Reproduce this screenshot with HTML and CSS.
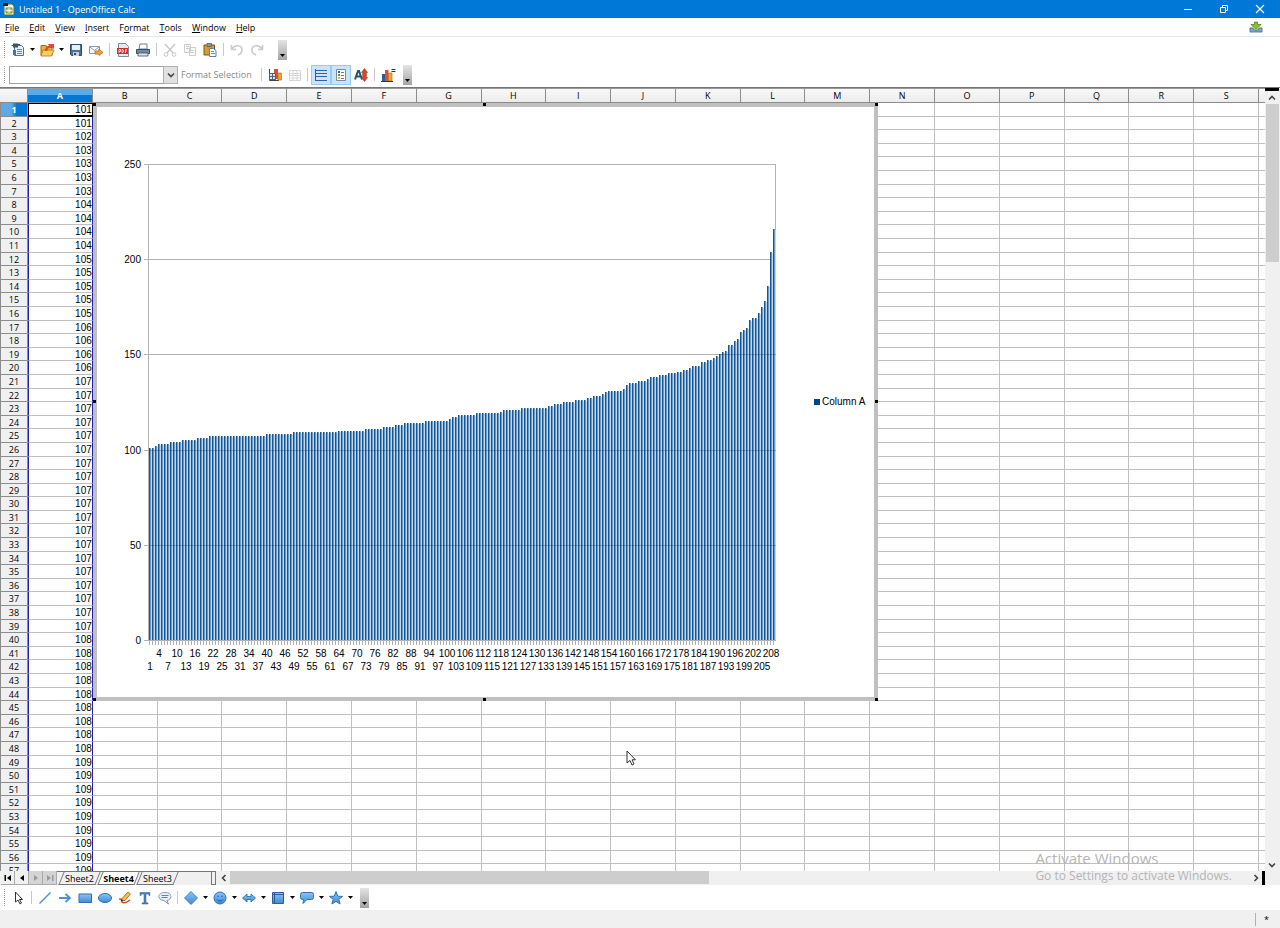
FILE: index.html
```html
<!DOCTYPE html>
<html lang="en">
<head>
<meta charset="utf-8">
<title>Untitled 1 - OpenOffice Calc</title>
<link rel="stylesheet" href="styles.css">
</head>
<body>
<svg class="defs" aria-hidden="true">
  <defs>
    <linearGradient id="blue" x1="0" y1="0" x2="0" y2="1"><stop offset="0" stop-color="#8cc4f4"/><stop offset="1" stop-color="#3b8cd8"/></linearGradient>
    <symbol id="caret" viewBox="0 0 5 3"><path d="M0 0h5L2.500 3z" fill="#000"/></symbol>
    <symbol id="chev" viewBox="0 0 8 8"><path d="M1 2.500l3 3 3-3" fill="none" stroke="#444" stroke-width="1.600"/></symbol>
  </defs>
</svg>

<header class="titlebar">
  <svg class="app-icon" viewBox="0 0 12 14"><path d="M1 2h8l2 2v9H1z" fill="#e9efe0" stroke="#5c6b48"/><path d="M0 1h5v3H0z" fill="#222"/><path d="M3 6h6v5H3z" fill="#b6cf5a" stroke="#71852a" stroke-width=".8"/><path d="M3 8.500h6M6 6v5" stroke="#fff" stroke-width=".8"/></svg>
  <h1>Untitled 1 - OpenOffice Calc</h1>
  <div class="win-buttons">
    <button aria-label="Minimize"><svg viewBox="0 0 10 10"><path d="M1 5.500h8" stroke="#fff"/></svg></button>
    <button aria-label="Restore"><svg viewBox="0 0 10 10"><path d="M1.500 3.500h5v5h-5zM3.500 3.500v-2h5v5h-2" fill="none" stroke="#fff"/></svg></button>
    <button aria-label="Close"><svg viewBox="0 0 10 10"><path d="M1 1l8 8M9 1l-8 8" stroke="#fff" stroke-width="1.100"/></svg></button>
  </div>
</header>

<nav class="menubar">
  <button><u>F</u>ile</button><button><u>E</u>dit</button><button><u>V</u>iew</button><button><u>I</u>nsert</button><button>F<u>o</u>rmat</button><button><u>T</u>ools</button><button><u>W</u>indow</button><button><u>H</u>elp</button>
  <button class="update" aria-label="Updates available"><svg viewBox="0 0 14 12"><path d="M1 7h3l1 2h4l1-2h3v4H1z" fill="#7fa9c8" stroke="#3f6a8c" stroke-width=".8"/><path d="M5.500 1h3v2.500H12L7 8.500 2 3.500h3.500z" fill="#86c32c" stroke="#4c8a12" stroke-width=".8"/></svg></button>
</nav>

<div class="toolbar" role="toolbar" aria-label="Standard">
  <span class="grip"></span>
  <button class="tool" aria-label="New"><svg viewBox="0 0 16 16"><path d="M4.500 3.500h7l2 2v8h-9z" fill="#e8f0f7" stroke="#56708a"/><path d="M3 1.500h5v4H3z" fill="#395570"/><path d="M1.500 3.500h3M8 2.500h2" stroke="#395570"/><path d="M7 7.500h5M7 9.500h5M7 11.500h5" stroke="#5d88b0"/><path d="M3 8h3v5H3z" fill="#4577a0"/></svg></button>
  <button class="drop" aria-label="New options"><svg><use href="#caret"/></svg></button>
  <button class="tool" aria-label="Open"><svg viewBox="0 0 16 16"><path d="M2 3.500h5l1 2h5v8H2z" fill="#f0b13a" stroke="#a9640f"/><path d="M4 8h11l-2.500 6H2z" fill="#fbd15c" stroke="#b8741a" stroke-width=".8"/><path d="M6 9c0-4 2-5 4-5L9 2h6v5l-2-1.500c-3-.5-4 .5-5 3.500z" fill="#d4502a"/></svg></button>
  <button class="drop" aria-label="Open options"><svg><use href="#caret"/></svg></button>
  <button class="tool" aria-label="Save"><svg viewBox="0 0 16 16"><path d="M2.500 2.500h11v11h-10l-1-1z" fill="#4a7396" stroke="#2b4a66"/><path d="M4 3h8v5H4z" fill="#e5eef5"/><path d="M5 10h6v4H5z" fill="#c6d3de"/><path d="M6 11h2v2H6z" fill="#2b4a66"/></svg></button>
  <button class="tool" aria-label="E-mail"><svg viewBox="0 0 16 16"><path d="M1.500 4.500h10v7h-10z" fill="#f7f7f7" stroke="#8b9bab"/><path d="M2 5l4.500 3.500L11 5" fill="none" stroke="#8b9bab"/><path d="M7 9h4V7l4 3.500-4 3V12H7z" fill="#f2a43c" stroke="#b3681a" stroke-width=".8"/></svg></button>
  <span class="sep"></span>
  <button class="tool" aria-label="Export as PDF"><svg viewBox="0 0 16 16"><path d="M3.500 1.500h7l3 3v10h-10z" fill="#e3e9ef" stroke="#7b8b9a"/><path d="M2 6h11v6H2z" fill="#d8262c"/><path d="M4 11V7.500h1.500v2H4M7 7.500v3h1l.8-1.500L8 7.500zM10.500 11V7.500H12M10.500 9H12" fill="none" stroke="#fff" stroke-width=".8"/></svg></button>
  <button class="tool" aria-label="Print"><svg viewBox="0 0 16 16"><path d="M5 2h7v5H4z" fill="#fff" stroke="#6b7f90"/><path d="M1.500 7.500h13v4h-13z" fill="#6e8ba3" stroke="#344f66"/><path d="M3 11h10v3H3z" fill="#dfe5ea" stroke="#344f66" stroke-width=".8"/></svg></button>
  <span class="sep"></span>
  <button class="tool" disabled aria-label="Cut"><svg viewBox="0 0 16 16" fill="none" stroke="#c6c6c6"><path d="M3 2l8 9M13 2L5 11" stroke-width="1.300"/><circle cx="4" cy="12.500" r="1.800"/><circle cx="12" cy="12.500" r="1.800"/></svg></button>
  <button class="tool" disabled aria-label="Copy"><svg viewBox="0 0 16 16" fill="#fafafa" stroke="#cdcdcd"><path d="M2.500 2.500h6v8h-6zM7.500 5.500h6v8h-6z"/><path d="M9 8.500h3M9 10.500h3M4 4.500h3M4 6.500h3"/></svg></button>
  <button class="tool" aria-label="Paste"><svg viewBox="0 0 16 16"><path d="M2 3h10.500v10H2z" fill="#d89b35" stroke="#7c5214"/><path d="M5 1.500h4.500v3H5z" fill="#8d9aa5" stroke="#4f5b66" stroke-width=".8"/><path d="M7.500 6.500h4l2.500 2v6H7.500z" fill="#f3f8fc" stroke="#5882a5"/><path d="M9 9.500h3M9 11.500h4" stroke="#5d93c0"/></svg></button>
  <span class="sep"></span>
  <button class="tool" disabled aria-label="Undo"><svg viewBox="0 0 16 16" fill="none" stroke="#cbcbcb" stroke-width="1.600"><path d="M2.500 3v4.500H7M3 7c3-5 10-4 10 1 0 2-1.500 4-4 5"/></svg></button>
  <button class="tool" disabled aria-label="Redo"><svg viewBox="0 0 16 16" fill="none" stroke="#cbcbcb" stroke-width="1.600"><path d="M13.500 3v4.500H9M13 7C10 2 3 3 3 8c0 2 1.500 4 4 5"/></svg></button>
  <button class="more wide" aria-label="More standard tools"><svg><use href="#caret"/></svg></button>
</div>

<div class="toolbar" role="toolbar" aria-label="Chart formatting">
  <span class="grip"></span>
  <span class="combo"><select aria-label="Chart element"><option></option></select><span class="combo-arrow"><svg><use href="#chev"/></svg></span></span>
  <button class="text-tool" disabled>Format Selection</button>
  <span class="sep"></span>
  <button class="tool" aria-label="Chart type"><svg viewBox="0 0 16 16"><path d="M2.500 2v11.500H12" fill="none" stroke="#444"/><path d="M7 2h4v10H7z" fill="#d8532a"/><path d="M11 6h3.500v7H11z" fill="#f2a62f" stroke="#b8701a" stroke-width=".7"/><path d="M2.500 6.500h6v6h-6z" fill="#dce7f0" stroke="#46627b"/><path d="M5.500 6.500v6M2.500 9.500h6" stroke="#46627b"/></svg></button>
  <button class="tool" disabled aria-label="Chart data table"><svg viewBox="0 0 16 16"><path d="M2.500 3.500h11v10h-11zM2.500 6.500h11M2.500 8.500h11M2.500 11h11M6 3.500v10M10 3.500v10" fill="none" stroke="#d6d6d6"/></svg></button>
  <span class="sep tight"></span>
  <button class="tool on" aria-pressed="true" aria-label="Horizontal grids"><svg viewBox="0 0 16 16"><path d="M2.500 2v12" stroke="#555"/><path d="M2 3.500h12M2 6.500h12M2 9.500h12M2 13.500h12" stroke="#2d62ad"/></svg></button>
  <button class="tool on" aria-pressed="true" aria-label="Legend"><svg viewBox="0 0 16 16"><path d="M3.500 2.500h9v11h-9z" fill="#fafcff" stroke="#7c8b99"/><path d="M5 4h2v2H5z" fill="#2b62a8"/><path d="M5 7h2v2H5z" fill="#e0692a"/><path d="M5 10h2v2H5z" fill="#f0b52e"/><path d="M8 5.500h3M8 8.500h3M8 11.500h3" stroke="#777"/></svg></button>
  <button class="tool" aria-label="Scale text"><svg viewBox="0 0 16 16"><path d="M2 12.500L5 4h1l3 8.500M3.500 9.500h4" fill="none" stroke="#24527a" stroke-width="2"/><path d="M11.500 1.500l3 4h-1.200v5h1.200l-3 4-3-4h1.200v-5H8.500z" fill="#d7482a" stroke="#99301a" stroke-width=".6"/></svg></button>
  <span class="sep"></span>
  <button class="tool" aria-label="Automatic layout"><svg viewBox="0 0 16 16"><path d="M2 7h3v7H2z" fill="#2c5f96"/><path d="M5 3h3.500v11H5z" fill="#d8532a"/><path d="M8.500 6H12v8H8.500z" fill="#f2a62f" stroke="#b8701a" stroke-width=".7"/><path d="M1 14.500h12M11.500 2.500h4M11.500 4.500h4" stroke="#333"/></svg></button>
  <button class="more" aria-label="More formatting tools"><svg><use href="#caret"/></svg></button>
</div>

<main class="workspace">
  <div class="sheet">
    <table class="cells" id="cells"><thead></thead><tbody></tbody></table>
    <svg class="chart" id="chart" viewBox="0 0 785 598" role="img" aria-label="Column A chart"></svg>
  </div>
  <div class="vscroll">
    <span class="split"></span>
    <button aria-label="Scroll up"><svg class="up"><use href="#chev"/></svg></button>
    <span class="vtrack"><span class="vthumb"></span></span>
    <button aria-label="Scroll down"><svg><use href="#chev"/></svg></button>
  </div>
</main>

<div class="tabrow">
  <button class="nav" aria-label="First sheet"><svg viewBox="0 0 8 8"><path d="M.500 1h1.500v6H.500zM7 1v6L3 4z"/></svg></button>
  <button class="nav" aria-label="Previous sheet"><svg viewBox="0 0 8 8"><path d="M6 1v6L2 4z"/></svg></button>
  <button class="nav" disabled aria-label="Next sheet"><svg viewBox="0 0 8 8"><path d="M2 1v6l4-3z"/></svg></button>
  <button class="nav" disabled aria-label="Last sheet"><svg viewBox="0 0 8 8"><path d="M1 1v6l4-3zM6 1h1.500v6H6z"/></svg></button>
  <div class="tabs">
    <button class="tab">Sheet2</button><button class="tab active">Sheet4</button><button class="tab">Sheet3</button>
  </div>
  <span class="tabsplit"></span>
  <button class="harrow" aria-label="Scroll left"><svg class="left"><use href="#chev"/></svg></button>
  <span class="htrack"><span class="hthumb"></span></span>
  <button class="harrow" aria-label="Scroll right"><svg class="right"><use href="#chev"/></svg></button>
  <span class="hsplit"></span>
</div>

<div class="toolbar" role="toolbar" aria-label="Drawing">
  <span class="grip"></span>
  <button class="tool" aria-label="Select"><svg viewBox="0 0 16 16"><path d="M5.500 2v10l2.500-2 2 4 1.500-1-2-3.500h3z" fill="#fff" stroke="#333"/></svg></button>
  <span class="sep"></span>
  <button class="tool" aria-label="Line"><svg viewBox="0 0 16 16"><path d="M2.500 13.500l11-11" stroke="#4a8fd4" stroke-width="1.400"/></svg></button>
  <button class="tool" aria-label="Arrow"><svg viewBox="0 0 16 16"><path d="M2 8h10M8.500 4l4.500 4-4.500 4" fill="none" stroke="#4a90d6" stroke-width="1.800"/></svg></button>
  <button class="tool" aria-label="Rectangle"><svg viewBox="0 0 16 16"><path d="M2 4h12.500v8.500H2z" fill="url(#blue)" stroke="#2c6fb3"/></svg></button>
  <button class="tool" aria-label="Ellipse"><svg viewBox="0 0 16 16"><ellipse cx="8" cy="8" rx="6.500" ry="4.500" fill="url(#blue)" stroke="#2c6fb3"/></svg></button>
  <button class="tool" aria-label="Freeform"><svg viewBox="0 0 16 16"><path d="M2 9c2 0 4 0 3 2s3 3 8-1" fill="none" stroke="#d44a2a" stroke-width="1.600"/><path d="M5 8.500L11 2l2.500 2L8 10.500 4.500 11z" fill="#f5c243" stroke="#8c5f14" stroke-width=".8"/><path d="M4.500 9l2 1.500-3 1z" fill="#333"/></svg></button>
  <button class="tool" aria-label="Text"><svg viewBox="0 0 16 16"><path d="M3 2.500h10v3h-1L11.500 4H9v8.500l2 .500v1H5v-1l2-.500V4H4.500L4 5.500H3z" fill="#4b83b8" stroke="#2e608f" stroke-width=".5"/></svg></button>
  <button class="tool" aria-label="Callout"><svg viewBox="0 0 16 16"><path d="M8 2.500c8 0 7 7.500 2 8l1.500 3.500-4.500-3.500C0 10 0 2.500 8 2.500z" fill="#eaf1f8" stroke="#8197ac"/><path d="M4.500 5.500h7M4.500 7.500h6" stroke="#6580a0"/></svg></button>
  <span class="sep tight"></span>
  <button class="tool" aria-label="Basic shapes"><svg viewBox="0 0 16 16"><path d="M8 1.500L14.500 8 8 14.500 1.500 8z" fill="url(#blue)" stroke="#2c6fb3" stroke-width=".8"/></svg></button>
  <button class="drop" aria-label="Basic shape options"><svg><use href="#caret"/></svg></button>
  <button class="tool" aria-label="Symbol shapes"><svg viewBox="0 0 16 16"><circle cx="8" cy="8" r="6" fill="url(#blue)" stroke="#2c6fb3"/><path d="M5 9.500c1.500 2 4.500 2 6 0M6 5.500v1.500M10 5.500v1.500" fill="none" stroke="#1c5596"/></svg></button>
  <button class="drop" aria-label="Symbol shape options"><svg><use href="#caret"/></svg></button>
  <button class="tool" aria-label="Block arrows"><svg viewBox="0 0 16 16"><path d="M1.500 8L6 4v2.500h4V4l4.500 4-4.500 4V9.500H6V12z" fill="url(#blue)" stroke="#2c6fb3" stroke-width=".9"/></svg></button>
  <button class="drop" aria-label="Block arrow options"><svg><use href="#caret"/></svg></button>
  <button class="tool" aria-label="Flowcharts"><svg viewBox="0 0 16 16"><path d="M2.500 2.500h11v11h-11z" fill="url(#blue)" stroke="#2c5f99"/><path d="M4.500 2v12M2 4.500h12" stroke="#2c5f99"/></svg></button>
  <button class="drop" aria-label="Flowchart options"><svg><use href="#caret"/></svg></button>
  <button class="tool" aria-label="Callouts"><svg viewBox="0 0 16 16"><path d="M3.500 2.500h9q2 0 2 2v3q0 2-2 2H8L4 13.500l.500-4h-1q-2 0-2-2v-3q0-2 2-2z" fill="url(#blue)" stroke="#2c6fb3"/></svg></button>
  <button class="drop" aria-label="Callout options"><svg><use href="#caret"/></svg></button>
  <button class="tool" aria-label="Stars"><svg viewBox="0 0 16 16"><path d="M8 1.500l1.800 4.700 4.700.200-3.700 3 1.300 4.600L8 11.400 3.900 14l1.300-4.600-3.700-3 4.700-.200z" fill="url(#blue)" stroke="#2c6fb3"/></svg></button>
  <button class="drop" aria-label="Star options"><svg><use href="#caret"/></svg></button>
  <button class="more" aria-label="More drawing tools"><svg><use href="#caret"/></svg></button>
</div>

<footer class="status"><span class="status-sep"></span><span class="status-dot">*</span></footer>

<div class="watermark"><p class="wm-title">Activate Windows</p><p class="wm-text">Go to Settings to activate Windows.</p></div>
<svg class="pointer" viewBox="0 0 10 16"><path d="M1 1v12l3-2.500 2 4.500 2-1-2-4.200h3.500z" fill="#fff" stroke="#333"/></svg>
<script src="script.js"></script>
</body>
</html>
```
FILE: styles.css
```css
* { box-sizing: border-box; }

body {
  margin: 0;
  height: 100vh;
  display: flex;
  flex-direction: column;
  position: relative;
  overflow: hidden;
  background: #fff;
  color: #000;
  font-family: "Open Sans", "Noto Sans", sans-serif;
  font-size: 9px;
}

button {
  margin: 0;
  padding: 0;
  border: 0;
  background: none;
  color: inherit;
  font: inherit;
  display: flex;
  align-items: center;
  justify-content: center;
}

svg { display: block; flex: none; }
.defs { position: absolute; width: 0; height: 0; }

.titlebar {
  flex: none;
  height: 18px;
  display: flex;
  align-items: center;
  padding: 0 2px 0 3px;
  gap: 4px;
  background: #0078d7;
  color: #fff;
}
.titlebar h1 { margin: 0; font-size: 9px; font-weight: 400; }
.app-icon { width: 12px; height: 14px; }
.win-buttons { margin-left: auto; display: flex; }
.win-buttons button { width: 36px; height: 18px; }
.win-buttons svg { width: 10px; height: 10px; }

.menubar {
  flex: none;
  height: 19px;
  display: flex;
  align-items: center;
  padding: 0 17px 0 5px;
  gap: 10px;
  border-bottom: 1px solid #e6e6e6;
}
.menubar u { text-underline-offset: 1px; }
.menubar .update { margin-left: auto; }
.update svg { width: 14px; height: 12px; }

.toolbar {
  flex: none;
  height: 25px;
  display: flex;
  align-items: center;
  padding-left: 4px;
}
.grip { width: 1px; height: 17px; margin-right: 3px; border-left: 1px dotted #999; }
.tool { width: 20px; height: 20px; flex: none; }
.tool svg { width: 16px; height: 16px; }
.tool.on { background: #cce4fb; outline: 1px solid #99cbf7; outline-offset: -1px; }
.drop { width: 9px; height: 20px; flex: none; }
.drop svg, .more svg { width: 5px; height: 3px; }
.sep { width: 1px; height: 13px; margin: 0 3px; background: #c8c8c8; }
.sep.tight { margin: 0 3px 0 2px; }
.more {
  width: 9px;
  height: 20px;
  margin-left: 5px;
  padding-bottom: 3px;
  align-items: flex-end;
  background: linear-gradient(#e4e4e4, #a4a4a4);
}
.more.wide { margin-left: 11px; }

.combo { display: flex; position: relative; width: 169px; height: 18px; margin-left: 1px; }
.combo select {
  width: 100%;
  height: 100%;
  border: 1px solid #a0a0a0;
  background: #fff;
  appearance: none;
  font: inherit;
}
.combo-arrow {
  position: absolute;
  top: 0;
  right: 0;
  width: 15px;
  height: 18px;
  display: flex;
  align-items: center;
  justify-content: center;
  border: 1px solid #b0b0b0;
  background: #e1e1e1;
  pointer-events: none;
}
.combo-arrow svg { width: 8px; height: 8px; }
.text-tool { padding: 0 6px 0 3px; color: #8a8a8a; white-space: nowrap; }

.workspace { flex: 1; min-height: 0; display: flex; border-top: 1px solid #777; }
.sheet { flex: 1; min-width: 0; position: relative; overflow: hidden; }

.cells { display: block; font-family: "Liberation Sans", Arial, sans-serif; font-size: 10px; }
.cells thead { display: block; height: 15px; }
.cells tbody { display: grid; grid-template-rows: repeat(57, minmax(0, 1fr)); height: 775px; }
.cells tr { display: grid; grid-template-columns: 28px repeat(19, 1fr) 6px; grid-template-rows: minmax(0, 1fr); }
.cells th, .cells td {
  min-width: 0;
  min-height: 0;
  padding: 0;
  line-height: 13px;
  border-right: 1px solid #c0c0c0;
  border-bottom: 1px solid #c0c0c0;
}
.cells th {
  font-family: "Open Sans", "Noto Sans", sans-serif;
  font-size: 9px;
  font-weight: 400;
  text-align: center;
  background: #f0f0f0;
  border-color: #8c8c8c;
}
.cells thead th { height: 15px; border-top: 1px solid #999; background: linear-gradient(#f8f8f8, #ececec); }
.cells tbody th { border-left: 1px solid #8c8c8c; }
.cells thead .on { color: #fff; font-weight: 700; background: linear-gradient(#5aa9e8 45%, #0078d7 46%); }
.cells tbody .on { color: #fff; font-weight: 700; background: linear-gradient(90deg, #5aa9e8 40%, #0078d7 60%); }
.cells .value { text-align: right; border-left: 1px solid #2020a8; border-right: 1px solid #2020a8; }
.cells .cursor { border: 1px solid #000; border-bottom-width: 2px; line-height: 12px; }
.cells td:last-child, .cells thead th:last-child { border-right: 0; }

.chart {
  position: absolute;
  left: 93px;
  top: 15px;
  width: 785px;
  height: 598px;
  font-family: "Liberation Sans", Arial, sans-serif;
  font-size: 10px;
}

.vscroll { width: 15px; display: flex; flex-direction: column; padding: 0 1px 0 0; background: #f0f0f0; }
.vscroll button { height: 13px; flex: none; }
.vscroll svg, .harrow svg { width: 8px; height: 8px; }
.up { transform: rotate(180deg); }
.left { transform: rotate(90deg); }
.right { transform: rotate(-90deg); }
.split { height: 3px; background: #000; }
.vtrack { flex: 1; }
.vthumb { display: block; height: 21%; margin-left: 1px; background: #cdcdcd; }

.tabrow { flex: none; height: 14px; display: flex; background: #f0f0f0; padding-left: 1px; }
.nav { width: 14px; border-right: 1px solid #aaa; border-bottom: 1px solid #aaa; }
.nav svg { width: 8px; height: 8px; fill: #000; }
.nav:disabled { background: #d4d4d4; }
.nav:disabled svg { fill: #9a9a9a; }
.tabs { display: flex; width: 155px; padding-left: 3px; border-top: 1px solid #777; border-right: 1px solid #777; }
.tab { position: relative; width: 39px; height: 13px; z-index: 0; }
.tab::before {
  content: "";
  position: absolute;
  inset: 0 1px;
  z-index: -1;
  border: 1px solid #777;
  border-top: 0;
  transform: skewX(-22deg);
}
.tab.active { font-weight: 700; }
.tab.active::before { background: #fff; }
.tabsplit { width: 4px; border: 1px solid #777; border-left: 0; margin-right: 2px; }
.harrow { width: 12px; flex: none; }
.htrack { flex: 1; }
.hthumb { display: block; width: 47%; height: 13px; background: #cdcdcd; }
.hsplit { width: 3px; background: #000; margin-right: 15px; }

.status {
  flex: none;
  height: 18px;
  display: flex;
  align-items: center;
  justify-content: flex-end;
  gap: 8px;
  padding-right: 11px;
  background: #f0f0f0;
}
.status-sep { width: 1px; height: 13px; background: #b0b0b0; }
.status-dot { font-size: 9px; }

.watermark { position: absolute; right: 48px; bottom: 44px; color: #b4b4b4; pointer-events: none; }
.watermark p { margin: 0; white-space: nowrap; }
.wm-title { font-size: 15px; line-height: 20px; }
.wm-text { font-size: 12px; line-height: 16px; }
.pointer { position: absolute; left: 626px; top: 750px; width: 10px; height: 16px; }
```
FILE: script.js
```js
// Runs of equal values in column A: [value, how many rows].
const runs = [
  [101, 2], [102, 1], [103, 4], [104, 4], [105, 5], [106, 4], [107, 19], [108, 9], [109, 15],
  [110, 9], [111, 6], [112, 4], [113, 3], [114, 7], [115, 8], [116, 1], [117, 2], [118, 6],
  [119, 8], [120, 1], [121, 6], [122, 9], [123, 2], [124, 3], [125, 4], [126, 4], [127, 2],
  [128, 3], [129, 1], [130, 1], [131, 5], [132, 1], [134, 1], [135, 3], [136, 3], [137, 1],
  [138, 3], [139, 3], [140, 3], [141, 2], [142, 2], [143, 1], [144, 3], [146, 2], [147, 2],
  [148, 1], [149, 1], [150, 1], [151, 1], [152, 1], [155, 2], [157, 1], [158, 1], [162, 1],
  [163, 1], [164, 1], [168, 1], [169, 2], [172, 1], [175, 1], [178, 1], [186, 1], [204, 1], [216, 1]
];
const values = runs.flatMap(([value, count]) => Array(count).fill(value));
const letters = "ABCDEFGHIJKLMNOPQRS".split("");

const head = "<tr><th></th>" +
  letters.map((l, i) => `<th scope="col"${i ? "" : ' class="on"'}>${l}</th>`).join("") + "<th></th></tr>";
const body = values.slice(0, 57).map((v, r) =>
  `<tr><th scope="row"${r ? "" : ' class="on"'}>${r + 1}</th>` +
  `<td class="value${r ? "" : " cursor"}">${v}</td>` + "<td></td>".repeat(19) + "</tr>").join("");
document.querySelector("#cells thead").innerHTML = head;
document.querySelector("#cells tbody").innerHTML = body;

// Chart: plot area in chart coordinates.
const left = 55, right = 683, base = 537, top0 = 61, step = 3;
const yOf = v => Math.round(base - v * (base - top0) / 250);
let out = '<rect x="2" y="2" width="781" height="594" fill="#fff" stroke="#c0c0c0" stroke-width="4"/>';
let grid = "";
for (let v = 0; v <= 250; v += 50) {
  const y = yOf(v) + 0.5;
  grid += `M${left - 4} ${y}H${right}`;
  out += `<text x="48" y="${y + 3}" text-anchor="end">${v}</text>`;
}
out += `<path d="${grid}M${left + 0.5} ${top0}V${base}M${right - 0.5} ${top0}V${base}" stroke="#b3b3b3" fill="none"/>`;
let dark = "", mid = "", light = "", ticks = "";
values.forEach((v, i) => {
  const x = left + 1 + i * step, y = yOf(v);
  dark += `M${x} ${y}h1V${base}h-1z`;
  mid += `M${x + 1} ${y}h1V${base}h-1z`;
  light += `M${x + 2} ${y + 1}h1V${base}h-1z`;
  ticks += `M${x + 0.5} ${base + 1}v4`;
  if (i % 3 === 0) {
    out += `<text x="${x + 1}" y="${i % 6 ? 554 : 567}" text-anchor="middle">${i + 1}</text>`;
  }
});
out += `<path d="${light}" fill="#bfd8ee"/><path d="${mid}" fill="#669bcb"/><path d="${dark}" fill="#1b538c"/>`;
out += `<path d="${ticks}" stroke="#b3b3b3"/>`;
for (const v of [50, 100, 150]) {
  const start = left + 1 + step * values.findIndex(n => n >= v);
  out += `<path d="M${start} ${yOf(v) + 0.5}H${right}" stroke="#003060" stroke-opacity=".3"/>`;
}
out += '<rect x="721" y="296" width="6" height="6" fill="#004586"/><text x="729" y="302">Column A</text>';
for (const [x, y] of [[0, 0], [390, 0], [782, 0], [0, 297], [782, 297], [0, 595], [390, 595], [782, 595]]) {
  out += `<rect x="${x}" y="${y}" width="3" height="3" fill="#000"/>`;
}
document.getElementById("chart").innerHTML = out;
```
